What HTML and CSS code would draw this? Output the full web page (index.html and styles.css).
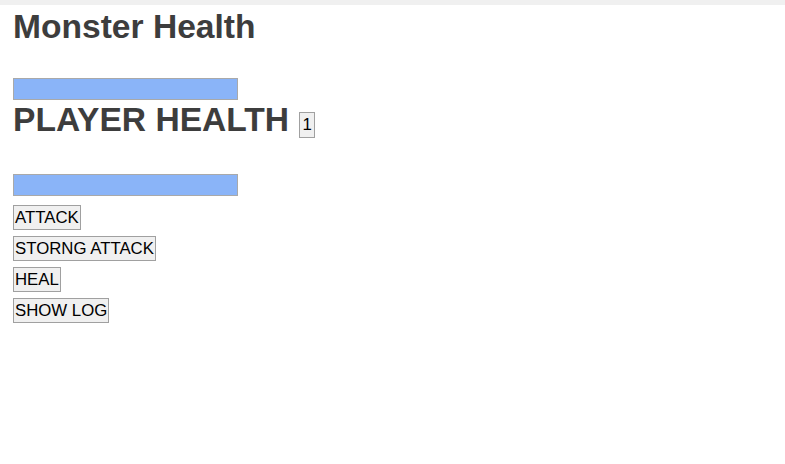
FILE: index.html
```html
<!DOCTYPE html>
<html lang="en">
<head>
  <meta charset="UTF-8" />
  <meta name="viewport" content="width=device-width, initial-scale=1.0"/>
  <title>Monster Slayer</title>
  <link rel="stylesheet" href="styles.css">
</head>
<body>

<div class="topbar"></div>

<main class="game">
  <!-- Monster -->
  <section id="monster">
    <h1>Monster Health</h1>
    <div class="health-bar"><div class="health-fill"></div></div>
  </section>

  <!-- Player -->
  <section id="player">
    <h1 class="player-title">PLAYER HEALTH <button class="bonus">1</button></h1>
    <div class="health-bar"><div class="health-fill"></div></div>
  </section>

  <!-- Controls -->
  <section id="controls">
    <button id="attack-btn">ATTACK</button>
    <button id="strong-attack-btn">STORNG ATTACK</button>
    <button id="heal-btn">HEAL</button>
    <button id="log-btn">SHOW LOG</button>
  </section>
</main>

</body>
</html>
```

FILE: styles.css
```css
body {
  font-family: "Liberation Sans", Arial, sans-serif;
  margin: 0;
  padding: 0;
  background: #fff;
  color: #3d3d3d;
}

.topbar {
  height: 5px;
  background: #f0f0f0;
}

.game {
  padding: 0 13px;
}

h1 {
  font-size: 33.6px;
  font-weight: bold;
  margin: 3px 0 0;
  line-height: 37px;
}

.player-title {
  margin: 0;
  line-height: 40px;
}

#monster .health-bar {
  margin-top: 33px;
}

#player .health-bar {
  margin-top: 34px;
}

.health-bar {
  width: 223px;
  height: 20px;
  border: 1px solid #a9a9a9;
  background: #ededed;
}

.health-fill {
  width: 100%;
  height: 100%;
  background: #8ab4f8;
}

.bonus {
  font-size: 16.8px;
  font-weight: normal;
  padding: 2px 2px 3px;
  margin-left: 1px;
  vertical-align: 1px;
}

#controls {
  display: flex;
  flex-direction: column;
  align-items: flex-start;
  gap: 6px;
  margin-top: 9px;
}

button {
  font-family: "Liberation Sans", Arial, sans-serif;
  font-size: 16.8px;
  color: #000;
  background: #f0f0f0;
  border: 1px solid #a0a0a0;
  padding: 2px 1px;
  line-height: 19px;
}
```
